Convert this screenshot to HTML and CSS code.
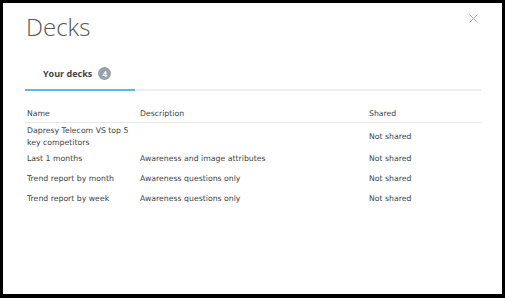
FILE: index.html
```html
<!DOCTYPE html>
<html lang="en">

<head>
    <meta charset="UTF-8">
    <title>Decks</title>
    <link rel="stylesheet" href="styles.css">
</head>

<body>

    <div class="modal">
        <div class="modal-header">
            <h1 class="title">Decks</h1>
            <svg class="close" width="9" height="9" viewBox="0 0 9 9">
                <path d="M0.5 0.5 L8.5 8.5 M8.5 0.5 L0.5 8.5" stroke="#aaa" stroke-width="1" fill="none" />
            </svg>
        </div>

        <div class="tabs">
            <div class="tab active">Your decks <span class="badge">4</span></div>
        </div>

        <table class="decks">
            <thead>
                <tr>
                    <th class="col-name">Name</th>
                    <th class="col-desc">Description</th>
                    <th>Shared</th>
                </tr>
            </thead>
            <tbody>
                <tr class="first">
                    <td>Dapresy Telecom VS top 5 key competitors</td>
                    <td></td>
                    <td>Not shared</td>
                </tr>
                <tr>
                    <td>Last 1 months</td>
                    <td>Awareness and image attributes</td>
                    <td>Not shared</td>
                </tr>
                <tr>
                    <td>Trend report by month</td>
                    <td>Awareness questions only</td>
                    <td>Not shared</td>
                </tr>
                <tr>
                    <td>Trend report by week</td>
                    <td>Awareness questions only</td>
                    <td>Not shared</td>
                </tr>
            </tbody>
        </table>
    </div>

</body>

</html>
```

FILE: styles.css
```css
body,
html {
    margin: 0;
    padding: 0;
    background: #000;
    height: 100%;
}

body {
    padding: 3px 3px 4px 3px;
    box-sizing: border-box;
}

.modal {
    background: #fff;
    height: 100%;
    box-sizing: border-box;
    padding: 8px 21px 0 22px;
    font-family: 'Open Sans', sans-serif;
}

.modal-header {
    display: flex;
    justify-content: space-between;
    align-items: flex-start;
}

.title {
    margin: 0 0 0 1px;
    font-size: 24px;
    font-weight: 300;
    color: #555;
    line-height: 32px;
}

.close {
    display: block;
    margin-top: 3px;
    margin-right: 3px;
}

.tabs {
    margin-top: 24px;
    border-bottom: 2px solid #eee;
    display: flex;
}

.tab {
    width: 110px;
    box-sizing: border-box;
    padding: 0 0 9px 18px;
    font-size: 9px;
    line-height: 12px;
    font-weight: 700;
    color: #444;
    margin-bottom: -2px;
    display: flex;
    align-items: center;
    gap: 6px;
}

.tab.active {
    border-bottom: 2px solid #5bb8e4;
}

.badge {
    display: inline-flex;
    justify-content: center;
    align-items: center;
    width: 13px;
    height: 13px;
    border-radius: 50%;
    background: #98a2ab;
    color: #fff;
    font-size: 8px;
    font-weight: 700;
}

.decks {
    width: 100%;
    border-collapse: collapse;
    margin-top: 17px;
    font-family: 'DejaVu Sans', sans-serif;
    font-size: 7.75px;
    color: #444;
}

.decks th {
    text-align: left;
    font-weight: 400;
    line-height: 12px;
    padding: 0 2px 2px;
    border-bottom: 1px solid #e6e6e6;
}

.decks td {
    padding: 4px 2px;
    line-height: 12px;
    vertical-align: middle;
}

.decks tr.first td {
    padding: 2px 2px 0;
}

.col-name {
    width: 109px;
}

.col-desc {
    width: 225px;
}
```
